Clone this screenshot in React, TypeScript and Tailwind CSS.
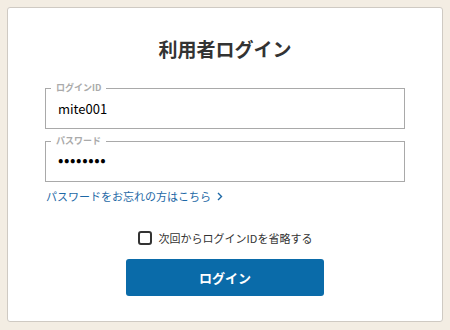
import { useState } from "react";

const FONT = "font-['Noto_Sans_CJK_JP','Noto_Sans',sans-serif]";

function Field({
  label,
  type,
  value,
}: {
  label: string;
  type: string;
  value: string;
}) {
  return (
    <fieldset className="h-[46px] rounded-none border border-[#a9a9a9] p-0">
      <legend className="ml-[5px] px-[5px] text-[9px] font-bold leading-[10px] text-[#aaa]">
        {label}
      </legend>
      <input
        type={type}
        defaultValue={value}
        className={`block h-[26px] w-full bg-transparent pl-3 leading-[26px] text-black outline-none ${
          type === "password"
            ? "text-[16px] tracking-[0.6px]"
            : "mt-[3px] text-[13px]"
        }`}
      />
    </fieldset>
  );
}

export default function App() {
  const [remember, setRemember] = useState(false);

  return (
    <div className={`${FONT} min-h-[330px] bg-[#f3ede3] p-[7px]`}>
      <div className="flex h-[315px] flex-col rounded-[3px] border border-[#cfcac3] bg-white px-[37px]">
        <h1 className="mt-[28px] text-center text-[19px] font-bold leading-[26px] text-[#333]">
          利用者ログイン
        </h1>

        <div className="mt-[21px] flex flex-col gap-[7px]">
          <Field label="ログインID" type="text" value="mite001" />
          <Field label="パスワード" type="password" value="password" />
        </div>

        <a
          href="#"
          className="mt-[6px] flex items-center gap-[6px] self-start pl-px text-[11px] leading-[16px] text-[#1d68a6]"
        >
          パスワードをお忘れの方はこちら
          <svg width="6" height="9" viewBox="0 0 6 9" fill="none">
            <path d="M1 1l3.5 3.5L1 8" stroke="currentColor" strokeWidth="1.4" />
          </svg>
        </a>

        <label className="mt-[26px] flex items-center gap-[7px] self-center text-[11px] leading-[16px] text-[#333]">
          <span
            onClick={() => setRemember(!remember)}
            className="flex h-[14px] w-[14px] items-center justify-center rounded-[3px] border-2 border-[#333]"
          >
            {remember && (
              <svg width="8" height="8" viewBox="0 0 8 8">
                <path d="M1 4l2 2 4-5" stroke="#333" strokeWidth="1.5" fill="none" />
              </svg>
            )}
          </span>
          次回からログインIDを省略する
        </label>

        <button className="mt-[13px] h-[37px] w-[198px] self-center rounded-[3px] bg-[#0a6ba9] text-[13px] font-bold text-white">
          ログイン
        </button>
      </div>
    </div>
  );
}
